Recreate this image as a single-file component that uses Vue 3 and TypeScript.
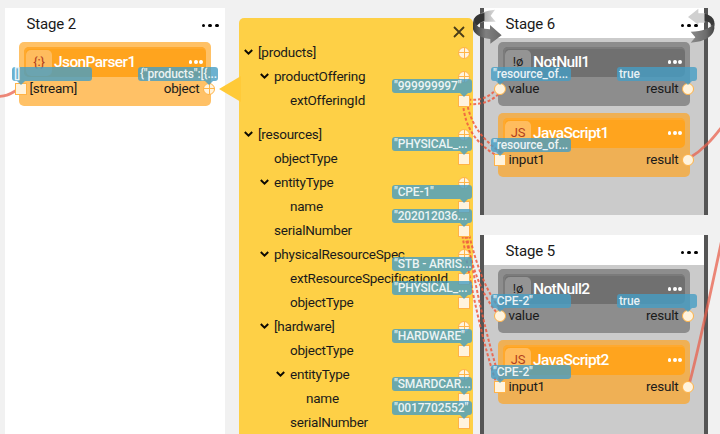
<script setup lang="ts">
type Shape = 'square' | 'round' | 'plus'

interface Port {
  name: string
  shape: Shape
  value?: string
}

interface FlowNode {
  title: string
  icon: string
  kind: 'orange' | 'grey' | 'script'
  input: Port
  output: Port
}

interface Stage {
  id: string
  title: string
  framed: boolean
  nodes: FlowNode[]
}

interface TreeRow {
  name: string
  depth: number
  open: boolean
  value?: string
  gap?: boolean
}

const stages: Stage[] = [
  {
    id: 'two',
    title: 'Stage 2',
    framed: false,
    nodes: [
      {
        title: 'JsonParser1',
        icon: '{:}',
        kind: 'orange',
        input: { name: '[stream]', shape: 'square', value: '[]' },
        output: { name: 'object', shape: 'plus', value: '{"products":[{...' },
      },
    ],
  },
  {
    id: 'six',
    title: 'Stage 6',
    framed: true,
    nodes: [
      {
        title: 'NotNull1',
        icon: '!ø',
        kind: 'grey',
        input: { name: 'value', shape: 'round', value: '"resource_of...' },
        output: { name: 'result', shape: 'round', value: 'true' },
      },
      {
        title: 'JavaScript1',
        icon: 'JS',
        kind: 'script',
        input: { name: 'input1', shape: 'square', value: '"resource_of...' },
        output: { name: 'result', shape: 'round' },
      },
    ],
  },
  {
    id: 'five',
    title: 'Stage 5',
    framed: true,
    nodes: [
      {
        title: 'NotNull2',
        icon: '!ø',
        kind: 'grey',
        input: { name: 'value', shape: 'round', value: '"CPE-2"' },
        output: { name: 'result', shape: 'round', value: 'true' },
      },
      {
        title: 'JavaScript2',
        icon: 'JS',
        kind: 'script',
        input: { name: 'input1', shape: 'square', value: '"CPE-2"' },
        output: { name: 'result', shape: 'round' },
      },
    ],
  },
]

const rows: TreeRow[] = [
  { name: '[products]', depth: 0, open: true },
  { name: 'productOffering', depth: 1, open: true },
  { name: 'extOfferingId', depth: 2, open: false, value: '"999999997"' },
  { name: '[resources]', depth: 0, open: true, gap: true },
  { name: 'objectType', depth: 1, open: false, value: '"PHYSICAL_...' },
  { name: 'entityType', depth: 1, open: true },
  { name: 'name', depth: 2, open: false, value: '"CPE-1"' },
  { name: 'serialNumber', depth: 1, open: false, value: '"202012036...' },
  { name: 'physicalResourceSpec', depth: 1, open: true },
  { name: 'extResourceSpecificationId', depth: 2, open: false, value: '"STB - ARRIS...' },
  { name: 'objectType', depth: 2, open: false, value: '"PHYSICAL_...' },
  { name: '[hardware]', depth: 1, open: true },
  { name: 'objectType', depth: 2, open: false, value: '"HARDWARE"' },
  { name: 'entityType', depth: 2, open: true },
  { name: 'name', depth: 3, open: false, value: '"SMARDCAR...' },
  { name: 'serialNumber', depth: 2, open: false, value: '"0017702552"' },
]
</script>

<template>
  <main class="canvas">
    <section v-for="s in stages" :key="s.id" class="stage" :class="[`stage-${s.id}`, { framed: s.framed }]">
      <header class="stage-head">
        <span>{{ s.title }}</span>
        <span class="dots"><i /><i /><i /></span>
      </header>
      <div class="stage-body">
        <article v-for="n in s.nodes" :key="n.title" class="node" :class="n.kind">
          <div class="node-head">
            <span class="node-icon">{{ n.icon }}</span>
            <span class="node-title">{{ n.title }}</span>
            <span class="dots light"><i /><i /><i /></span>
          </div>
          <div class="node-ports">
            <span class="port" :class="n.input.shape">
              <span v-if="n.input.value" class="tip start">{{ n.input.value }}</span>
            </span>
            <span class="port-name">{{ n.input.name }}</span>
            <span class="port-name end">{{ n.output.name }}</span>
            <span class="port" :class="n.output.shape">
              <span v-if="n.output.value" class="tip finish">{{ n.output.value }}</span>
            </span>
          </div>
        </article>
      </div>
    </section>

    <aside class="tree">
      <svg class="beak" viewBox="0 0 22 26"><path d="M0 13 22 0V26Z" fill="#ffca38" /></svg>
      <div class="tree-head">
        <svg width="12" height="12" viewBox="0 0 12 12"><path d="M1 1 11 11M11 1 1 11" stroke="#4a3d18" stroke-width="1.8" /></svg>
      </div>
      <div v-for="(r, i) in rows" :key="i" class="row" :class="[`depth-${r.depth}`, { gap: r.gap }]">
        <span class="twist">
          <svg v-if="r.open" width="9" height="6" viewBox="0 0 9 6"><path d="M.8 1 4.5 4.6 8.2 1" fill="none" stroke="#0d0a03" stroke-width="2" /></svg>
        </span>
        <span class="row-name">{{ r.name }}</span>
        <span class="port" :class="r.open ? 'plus' : 'square'">
          <span v-if="r.value" class="tip finish-tree">{{ r.value }}</span>
        </span>
      </div>
    </aside>

    <svg class="wires" viewBox="0 0 720 434">
      <g fill="none" stroke="#e8604c" stroke-opacity=".75" stroke-width="2.8">
        <path d="M-4 96.5C5 96.5 9 95 17 90" />
        <path d="M688 159C703 150 712 140 724 124" />
        <path d="M689 385C701 340 712 285 724 230" />
      </g>
      <g fill="none" stroke="#ee5a40" stroke-opacity=".85" stroke-width="2" stroke-dasharray="3 2">
        <path d="M468 99.5C482 101 489 97 499 87" />
        <path d="M468 104C483 105 492 101 502 91" />
        <path d="M463 103C465 130 478 145 499 157" />
        <path d="M467 102C470 123 482 140 502 153" />
        <path d="M463 226C470 258 478 290 497 313" />
        <path d="M467 226C474 256 483 288 501 310" />
        <path d="M461 226C469 280 483 345 497 385" />
        <path d="M465.500 226C473 278 487 340 501 383" />
      </g>
    </svg>

    <svg class="ribbon left" viewBox="0 0 120 150">
      <defs>
        <linearGradient id="ra" x1="0" x2="1"><stop offset="0" stop-color="#3a3a3a" /><stop offset=".45" stop-color="#808080" /><stop offset="1" stop-color="#686868" /></linearGradient>
        <linearGradient id="rb" x1="0" x2="1"><stop offset="0" stop-color="#777" /><stop offset="1" stop-color="#d5d5d5" /></linearGradient>
      </defs>
      <path d="M90 29Q48 33 32 52Q22 65 38 76Q42 69 58 65L92 65 77 47Z" fill="url(#rb)" fill-opacity=".85" />
      <path d="M58 38Q25 43 24 68V88Q31 112 76 117V131L110 106 75 75V88Q40 85 36 76Q40 69 58 62Z" fill="url(#ra)" />
      <path d="M58 39Q28 46 28 60Q28 69 36 76Q41 68 58 62Z" fill="#333" />
    </svg>
    <svg class="ribbon right" viewBox="0 0 150 150">
      <defs>
        <linearGradient id="rc" x1="0" x2="1"><stop offset="0" stop-color="#8a8a8a" /><stop offset=".65" stop-color="#6c6c6c" /><stop offset="1" stop-color="#444" /></linearGradient>
      </defs>
      <path d="M54 51 85 26V40H104V68H85V74Z" fill="#d0d0d0" />
      <path d="M104 41Q130 47 133 65V77H122Q126 67 104 62Z" fill="#383838" />
      <path d="M62 95Q116 94 133 68V86Q127 122 62 128L76 112Z" fill="url(#rc)" />
    </svg>
  </main>
</template>

<style>
body {
  margin: 0;
}
</style>

<style scoped>
.canvas {
  position: relative;
  width: 720px;
  height: 434px;
  overflow: hidden;
  background: #f1f1f1;
  font-family: Roboto, 'Liberation Sans', sans-serif;
  color: #1a1a1a;
}

.stage {
  position: absolute;
  box-sizing: border-box;
  width: 220px;
  background: #fff;
}
.stage-two { left: 5px; top: 8px; height: 440px; }
.stage-six { left: 480px; top: 8px; height: 207px; }
.stage-five { left: 480px; top: 235px; height: 207px; }
.framed {
  width: 228px;
  border: solid #555;
  border-width: 0 4px;
  background: #cbcbcb;
}
.stage-head {
  display: flex;
  align-items: center;
  justify-content: space-between;
  height: 30px;
  padding: 1px 6px 0 21.5px;
  box-sizing: border-box;
  background: #fff;
  font-size: 15px;
  letter-spacing: -.15px;
}
.dots {
  display: flex;
  gap: 3px;
  padding-top: 4px;
}
.dots i {
  width: 3.8px;
  height: 3.8px;
  border-radius: 50%;
  background: #000;
}
.light { gap: 1.5px; margin-left: auto; padding: 0; }
.light i { background: #fff; }

.stage-body {
  display: flex;
  flex-direction: column;
  gap: 7px;
  padding: 4px 14px;
}
.node {
  box-sizing: border-box;
  width: 192px;
  height: 64px;
  padding: 5px;
  border-radius: 5px;
  background: #ffc166;
}
.node-head {
  display: flex;
  align-items: center;
  box-sizing: border-box;
  height: 30px;
  padding: 0 3px 0 2px;
  border-radius: 5px;
  background: #ffa41e;
  box-shadow: inset 1px 1px 0 1px rgba(255, 170, 50, .8);
}
.node-icon {
  width: 26px;
  height: 26px;
  margin-top: 2px;
  border-radius: 5px;
  background: #ffbc5e;
  color: #b3411e;
  font-size: 13px;
  line-height: 23px;
  text-align: center;
  letter-spacing: -.2px;
}
.node-title {
  padding: 0 0 0 2px;
  color: #fff;
  font-size: 15.500px;
  font-weight: 500;
  line-height: 30px;
  letter-spacing: -.6px;
}
.script { background: #efb055; }
.grey { background: #8d8d8d; }
.grey .node-head { background: #707070; box-shadow: inset 1px 1px 0 1px #7b7b7b; }
.grey .node-icon { background: #949494; color: #222; }

.node-ports {
  display: flex;
  align-items: center;
  height: 23px;
  margin: 0 -9px;
  font-size: 13.5px;
  letter-spacing: -.22px;
}
.port-name { padding: 0 0 2px 2.5px; }
.port-name.end { margin-left: auto; padding: 0 3.5px 2px 0; }

.port {
  position: relative;
  z-index: 2;
  flex: none;
  box-sizing: border-box;
  width: 12px;
  height: 12px;
  border: 1px solid #ffb347;
  background: #fff3dd;
}
.round, .plus { border-radius: 50%; }
.plus {
  background:
    linear-gradient(#ffb54a, #ffb54a) center / 1px 100% no-repeat,
    linear-gradient(#ffb54a, #ffb54a) center / 100% 1px no-repeat,
    #fff3dd;
}
.tip {
  position: absolute;
  top: -16.5px;
  box-sizing: border-box;
  width: 80px;
  height: 14px;
  padding-left: 2px;
  border-radius: 3px;
  background: rgba(70, 158, 196, .8);
  color: rgba(255, 255, 255, .88);
  font-size: 12px;
  font-weight: 500;
  line-height: 14px;
  letter-spacing: -.15px;
  white-space: nowrap;
}
.tip::after {
  content: '';
  position: absolute;
  top: 14px;
  border: solid transparent;
  border-width: 4px 4px 0;
  border-top-color: rgba(70, 158, 196, .8);
}
.start { left: -4px; }
.start::after { left: 5px; }
.finish { right: -4px; }
.finish::after { right: 5px; }
.finish-tree { top: -17px; right: -3px; }
.finish-tree::after { right: 4px; }

.tree {
  position: absolute;
  left: 239px;
  top: 18px;
  box-sizing: border-box;
  width: 234px;
  height: 430px;
  border-radius: 5px;
  background: #fed046;
}
.beak {
  position: absolute;
  left: -20px;
  top: 58px;
  width: 22px;
  height: 26px;
}
.tree-head {
  display: flex;
  justify-content: flex-end;
  align-items: flex-end;
  height: 22px;
  padding-right: 8px;
  box-sizing: border-box;
}
.tree-head svg { margin-bottom: 2px; }
.row {
  display: flex;
  align-items: center;
  height: 24px;
  padding: 0 3px 0 5px;
  font-size: 13.5px;
  letter-spacing: -.24px;
  white-space: nowrap;
}
.row-name { padding-bottom: 1px; }
.gap { margin-top: 10px; }
.depth-1 { padding-left: 21px; }
.depth-2 { padding-left: 37px; }
.depth-3 { padding-left: 53px; }
.twist { display: flex; flex: none; width: 14px; }
.row .port { margin: 1px 0 0 auto; }

.wires {
  position: absolute;
  inset: 0;
  z-index: 1;
  width: 720px;
  height: 434px;
}
.ribbon {
  position: absolute;
  z-index: 3;
  top: 0;
  height: 50px;
}
.left { left: 465px; width: 40px; }
.right { left: 670px; width: 50px; }
</style>
